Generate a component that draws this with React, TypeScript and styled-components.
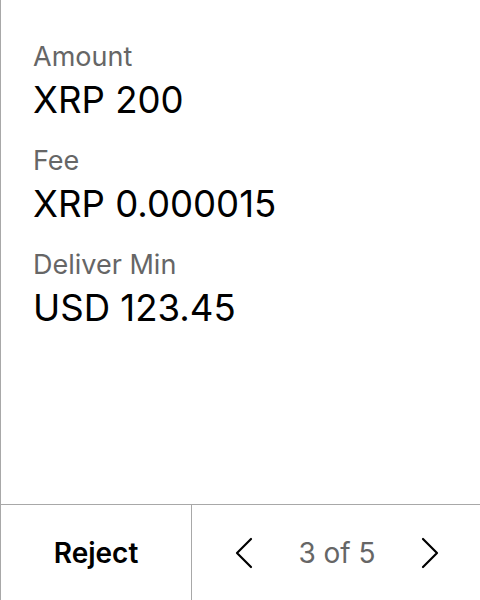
import React from "react";
import styled, { createGlobalStyle } from "styled-components";

const Global = createGlobalStyle`
  html, body { margin: 0; padding: 0; background: #fff; }
  body { font-family: Inter, "Noto Sans", sans-serif; }
`;

const Screen = styled.div`
  box-sizing: border-box;
  width: 480px;
  height: 600px;
  border-left: 1px solid #a8a8a8;
  display: flex;
  flex-direction: column;
  background: #fff;
`;

const Details = styled.div`
  flex: 1;
  padding: 40px 0 0 32px;
  display: flex;
  flex-direction: column;
  gap: 18px;
`;

const Field = styled.div`
  display: flex;
  flex-direction: column;
`;

const Label = styled.div`
  font-size: 27px;
  line-height: 34px;
  color: #666;
`;

const Value = styled.div`
  font-size: 36.6px;
  line-height: 52px;
  color: #000;
`;

const Footer = styled.div`
  height: 95px;
  border-top: 1px solid #a8a8a8;
  display: flex;
`;

const RejectButton = styled.button`
  width: 191px;
  border: none;
  border-right: 1px solid #a8a8a8;
  background: transparent;
  font-family: inherit;
  font-size: 28px;
  font-weight: 600;
  color: #000;
  padding: 0;
  cursor: pointer;
`;

const Pager = styled.div`
  flex: 1;
  display: flex;
  align-items: center;
  justify-content: space-between;
  padding: 0 38px 0 40px;
`;

const NavButton = styled.button`
  border: none;
  background: transparent;
  padding: 0;
  width: 24px;
  height: 32px;
  display: flex;
  align-items: center;
  justify-content: center;
  cursor: pointer;
`;

const PageText = styled.span`
  font-size: 28px;
  color: #666;
`;

const Chevron = ({ dir }: { dir: "left" | "right" }) => (
  <svg width="20" height="32" viewBox="0 0 20 32" fill="none">
    <path
      d={dir === "left" ? "M17 2 L3 16 L17 30" : "M3 2 L17 16 L3 30"}
      stroke="#000"
      strokeWidth="2.2"
      strokeLinecap="round"
      strokeLinejoin="round"
    />
  </svg>
);

const fields = [
  { label: "Amount", value: "XRP 200" },
  { label: "Fee", value: "XRP 0.000015" },
  { label: "Deliver Min", value: "USD 123.45" },
];

export default function App() {
  return (
    <>
      <Global />
      <Screen>
        <Details>
          {fields.map((f) => (
            <Field key={f.label}>
              <Label>{f.label}</Label>
              <Value>{f.value}</Value>
            </Field>
          ))}
        </Details>
        <Footer>
          <RejectButton>Reject</RejectButton>
          <Pager>
            <NavButton aria-label="Previous">
              <Chevron dir="left" />
            </NavButton>
            <PageText>3 of 5</PageText>
            <NavButton aria-label="Next">
              <Chevron dir="right" />
            </NavButton>
          </Pager>
        </Footer>
      </Screen>
    </>
  );
}
